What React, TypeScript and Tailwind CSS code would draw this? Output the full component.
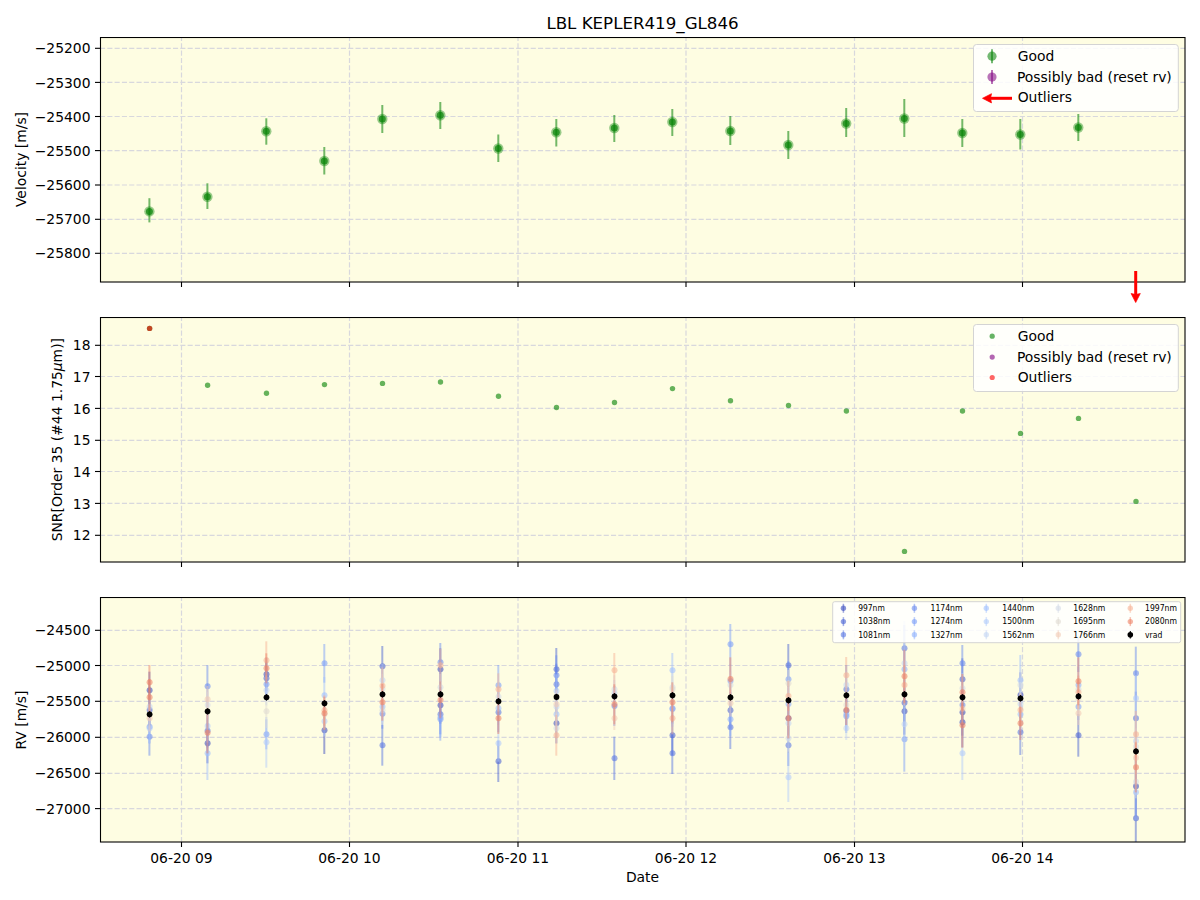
import React from "react";

const XT = [181.5, 349.5, 518, 686, 854.5, 1022.5];
const XL = ["06-20 09", "06-20 10", "06-20 11", "06-20 12", "06-20 13", "06-20 14"];
const X = [149.4, 207.4, 266.3, 324.3, 382.3, 440.3, 498.3, 556.3, 614.3, 672.3, 730.3, 788.3, 846.2, 904.3, 962.3, 1020.3, 1078.3, 1135.8];

const P = ["#3b4cc0", "#4a63d3", "#5977e3", "#6a8bef", "#7b9ff9", "#8db0fe", "#9fbfff", "#b1cbfc", "#c3d5f4", "#d3dbe7", "#e0dbd2", "#f2cbb7", "#f7b396", "#ee8468"];
const LEG = ["997nm", "1038nm", "1081nm", "1174nm", "1274nm", "1327nm", "1440nm", "1500nm", "1562nm", "1628nm", "1695nm", "1766nm", "1997nm", "2080nm"];

const V: [number, number, number][] = [
  [211.4, 198.2, 222.4], [196.7, 183.3, 209], [131.3, 118.3, 144.7], [161, 147, 174.5], [119, 105, 133],
  [115.3, 102, 129], [148.5, 134.5, 162], [132.3, 119, 146.5], [128, 115, 142], [122, 109, 136],
  [131, 116, 145], [145, 131, 159], [123.5, 108, 137], [118.5, 99, 137], [133, 119, 147],
  [134.5, 119, 149.5], [127.5, 114, 141],
];
const SNR = [328.4, 385.3, 393.3, 384.6, 383.4, 382, 396.2, 407.5, 402.5, 388.6, 400.7, 405.5, 411, 551.4, 411, 433.4, 418.4, 501.4];

type D = [number, number, number];
const COLS: { off: number; k: number; d: D[] }[] = [
  { off: 600, k: 343, d: [[247, 13, 52], [271, 0, 56], [292, 13, 55], [320, 8, 40], [330, 1, 50], [355, 11, 40], [380, 4, 50], [385, 7, 45], [410, 3, 57]] },
  { off: 600, k: 334, d: [[259, 3, 64], [298, 11, 40], [315, 9, 40], [378, 7, 50], [392, 2, 50], [398, 13, 62], [430, 0, 60], [460, 6, 80]] },
  { off: 600, k: 292, d: [[181, 12, 57], [205, 13, 45], [223, 0, 50], [235, 1, 50], [253, 4, 50], [271, 8, 45], [334, 10, 50], [403, 4, 45], [427, 7, 76]] },
  { off: 600, k: 310, d: [[190, 4, 58], [286, 6, 55], [331, 12, 45], [340, 13, 50], [343, 10, 45], [364, 7, 45], [391, 0, 71]] },
  { off: 600, k: 283, d: [[199, 1, 61], [241, 8, 50], [257, 12, 55], [266, 9, 45], [307, 13, 55], [320, 6, 45], [331, 9, 40], [341, 3, 45], [436, 2, 61]] },
  { off: 600, k: 283, d: [[187, 3, 58], [196, 12, 50], [208, 0, 63], [262, 9, 40], [300, 13, 55], [316, 0, 55], [343, 2, 60], [352, 5, 60], [358, 4, 64]] },
  { off: 600, k: 304, d: [[256, 4, 61], [268, 12, 48], [290, 9, 45], [325, 6, 50], [337, 2, 60], [355, 13, 47], [430, 7, 55], [484, 1, 62]] },
  { off: 600, k: 291, d: [[208, 1, 64], [226, 3, 60], [253, 2, 62], [273, 7, 50], [313, 11, 45], [320, 8, 45], [343, 6, 50], [370, 0, 60], [385, 9, 45], [406, 12, 61]] },
  { off: 600, k: 289, d: [[211, 12, 52], [268, 9, 42], [280, 8, 40], [313, 13, 60], [318, 3, 60], [355, 11, 35], [475, 2, 65]] },
  { off: 600, k: 286, d: [[211, 6, 52], [262, 9, 42], [268, 10, 40], [307, 13, 60], [325, 5, 55], [327, 4, 45], [355, 12, 48], [406, 1, 60], [460, 2, 62]] },
  { off: 600, k: 292, d: [[133, 4, 61], [237, 13, 65], [243, 4, 50], [255, 9, 40], [310, 11, 40], [331, 1, 55], [358, 5, 50], [382, 2, 65]] },
  { off: 600, k: 301, d: [[196, 1, 64], [238, 4, 55], [250, 10, 40], [288, 12, 45], [312, 5, 50], [355, 13, 60], [355, 0, 62], [370, 8, 45], [415, 9, 40], [436, 2, 62], [532, 7, 74]] },
  { off: 595, k: 301, d: [[241, 12, 55], [270, 8, 40], [283, 2, 73], [330, 10, 35], [345, 13, 45], [347, 1, 60], [358, 5, 50], [364, 4, 50], [400, 8, 35]] },
  { off: 595, k: 298, d: [[160, 2, 70], [205, 8, 127], [223, 5, 60], [244, 13, 80], [270, 12, 60], [323, 1, 70], [349, 0, 70], [388, 8, 60], [433, 4, 97]] },
  { off: 595, k: 307, d: [[205, 3, 55], [253, 1, 63], [280, 9, 45], [292, 13, 55], [330, 3, 55], [341, 11, 45], [352, 0, 70], [382, 0, 75], [391, 13, 67], [475, 7, 80]] },
  { off: 595, k: 310, d: [[256, 6, 76], [270, 9, 45], [300, 0, 68], [327, 8, 40], [345, 12, 50], [358, 6, 50], [385, 13, 50], [412, 2, 68]] },
  { off: 595, k: 304, d: [[178, 3, 53], [259, 13, 72], [270, 5, 55], [283, 9, 40], [292, 12, 50], [312, 10, 40], [335, 4, 40], [355, 11, 35], [421, 1, 64]] },
  { off: 595, k: 469, d: [[235, 3, 80], [310, 7, 70], [370, 2, 80], [418, 12, 70], [438, 8, 60], [455, 9, 55], [488, 11, 50], [517, 13, 75], [560, 9, 50], [574, 0, 90], [592, 6, 85], [670, 1, 100]] },
];

const GRID = "#d8d8dd";
const GREEN = "#008000";
const PURPLE = "#800080";

function Frame({ top, ys, labels, children, xlabels }: { top: number; ys: number[]; labels: string[]; children?: React.ReactNode; xlabels?: boolean }) {
  const b = top + 245;
  return (
    <g>
      <rect x={100} y={top} width={1085} height={245} fill="#fefde2" />
      {XT.map((x) => (
        <line key={x} x1={x} x2={x} y1={b} y2={top} stroke={GRID} strokeWidth={1.2} strokeDasharray="5.1 2.2" />
      ))}
      {ys.map((y) => (
        <line key={y} x1={100} x2={1185} y1={y} y2={y} stroke={GRID} strokeWidth={1.2} strokeDasharray="5.1 2.2" />
      ))}
      {children}
      <rect x={100.5} y={top + 0.5} width={1084.5} height={244.5} fill="none" stroke="#000" strokeWidth={1.1} />
      {XT.map((x) => (
        <line key={x} x1={x} x2={x} y1={b} y2={b + 5} stroke="#000" strokeWidth={1.1} />
      ))}
      {ys.map((y, i) => (
        <g key={y}>
          <line x1={95} x2={100} y1={y} y2={y} stroke="#000" strokeWidth={1.1} />
          <text x={90.5} y={y + 5.1} textAnchor="end" fontSize={13.89} fill="#000">{labels[i]}</text>
        </g>
      ))}
      {xlabels &&
        XT.map((x, i) => (
          <text key={x} x={x} y={863} textAnchor="middle" fontSize={13.89} fill="#000">{XL[i]}</text>
        ))}
    </g>
  );
}

function Arrow({ x1, y1, x2, y2 }: { x1: number; y1: number; x2: number; y2: number }) {
  const a = (Math.atan2(y2 - y1, x2 - x1) * 180) / Math.PI;
  const len = Math.hypot(x2 - x1, y2 - y1);
  return (
    <g transform={`translate(${x1} ${y1}) rotate(${a})`}>
      <line x1={0} y1={0} x2={len - 6} y2={0} stroke="#ff0000" strokeWidth={3} />
      <path d={`M${len} 0 L${len - 9} -4.6 L${len - 8} 0 L${len - 9} 4.6 Z`} fill="#ff0000" stroke="#ff0000" strokeWidth={0.7} />
    </g>
  );
}

function BigLegend({ top, arrow }: { top: number; arrow: boolean }) {
  const ty = [top + 17.2, top + 38, top + 58.4];
  const my = [top + 12.7, top + 33.6, top + 54];
  return (
    <g>
      <rect x={973.5} y={top + 1} width={204.8} height={67} rx={3} fill="#ffffff" fillOpacity={0.85} stroke="#d4d4d4" />
      {arrow ? (
        <>
          <line x1={992} x2={992} y1={my[0] - 7} y2={my[0] + 7} stroke={GREEN} strokeOpacity={0.55} strokeWidth={2} />
          <circle cx={992} cy={my[0]} r={4.6} fill={GREEN} fillOpacity={0.55} />
          <line x1={992} x2={992} y1={my[1] - 7} y2={my[1] + 7} stroke={PURPLE} strokeOpacity={0.55} strokeWidth={2} />
          <circle cx={992} cy={my[1]} r={4.6} fill={PURPLE} fillOpacity={0.55} />
          <Arrow x1={1012} y1={98.3} x2={982.5} y2={98.3} />
        </>
      ) : (
        <>
          <circle cx={992.2} cy={my[0]} r={2.6} fill={GREEN} fillOpacity={0.6} />
          <circle cx={992.2} cy={my[1]} r={2.6} fill={PURPLE} fillOpacity={0.6} />
          <circle cx={992.2} cy={my[2]} r={2.6} fill="#ff0000" fillOpacity={0.6} />
        </>
      )}
      <text x={1017.7} y={ty[0]} fontSize={13.89} fill="#000">Good</text>
      <text x={1017} y={ty[1]} fontSize={13.89} fill="#000">Possibly bad (reset rv)</text>
      <text x={1017.7} y={ty[2]} fontSize={13.89} fill="#000">Outliers</text>
    </g>
  );
}

function Velocity() {
  return (
    <svg width={1200} height={280} viewBox="0 37 1200 280" className="block">
      <Frame
        top={37}
        ys={[48.3, 82.4, 116.5, 150.6, 185, 219.3, 253.3]}
        labels={["−25200", "−25300", "−25400", "−25500", "−25600", "−25700", "−25800"]}
      >
        {V.map(([y, a, b], i) => (
          <g key={i}>
            <line x1={X[i]} x2={X[i]} y1={a} y2={b} stroke={GREEN} strokeOpacity={0.55} strokeWidth={2} />
            <circle cx={X[i]} cy={y} r={5.2} fill={GREEN} fillOpacity={0.4} />
            <circle cx={X[i]} cy={y} r={3.5} fill={GREEN} fillOpacity={0.68} />
          </g>
        ))}
        <BigLegend top={43.5} arrow />
      </Frame>
      <text transform="translate(26 159.5) rotate(-90)" textAnchor="middle" fontSize={13.89} fill="#000">Velocity [m/s]</text>
      <Arrow x1={1135.7} y1={271} x2={1135.7} y2={302.5} />
    </svg>
  );
}

function Snr() {
  return (
    <svg width={1200} height={280} viewBox="0 317 1200 280" className="block">
      <Frame
        top={317}
        ys={[345.3, 376.5, 408.4, 440.3, 471.5, 503.4, 535.3]}
        labels={["18", "17", "16", "15", "14", "13", "12"]}
      >
        {SNR.map((y, i) => (
          <circle key={i} cx={X[i] + 0.2} cy={y} r={2.7} fill={GREEN} fillOpacity={0.6} />
        ))}
        <circle cx={X[0] + 0.2} cy={SNR[0]} r={2.7} fill="#ff0000" fillOpacity={0.6} />
        <BigLegend top={323.5} arrow={false} />
      </Frame>
      <text
        transform="translate(62 439.7) rotate(-90)"
        textAnchor="middle"
        fontSize={13.89}
        fill="#000"
      >
        SNR[Order 35 (#44 1.75<tspan fontStyle="italic">μ</tspan>m)]
      </text>
    </svg>
  );
}

function Rv() {
  const lx = [[843.4, 858.2], [914.4, 930.5], [986.3, 1002.3], [1058.3, 1073.3], [1130.3, 1145]];
  const ly = [608.3, 621.6, 634.8];
  return (
    <svg width={1200} height={303} viewBox="0 597 1200 303" className="block">
      <defs>
        <clipPath id="rvclip">
          <rect x={100} y={597} width={1085} height={245} />
        </clipPath>
      </defs>
      <Frame
        top={597}
        ys={[630.3, 665.5, 701.3, 737.3, 773.3, 808.6]}
        labels={["−24500", "−25000", "−25500", "−26000", "−26500", "−27000"]}
        xlabels
      >
        <g clipPath="url(#rvclip)">
          {COLS.map((c, i) => {
            const ds = [...c.d].sort((a, b) => a[1] - b[1]);
            const kY = c.off + c.k / 3;
            return (
              <g key={i}>
                {ds.map((d, j) => {
                  const y = c.off + d[0] / 3;
                  const h = d[2] / 3;
                  return (
                    <g key={j}>
                      <line x1={X[i]} x2={X[i]} y1={y - h} y2={y + h} stroke={P[d[1]]} strokeOpacity={0.5} strokeWidth={2} />
                      <circle cx={X[i] + 0.2} cy={y} r={3} fill={P[d[1]]} fillOpacity={0.58} />
                    </g>
                  );
                })}
                <line x1={X[i] + 0.2} x2={X[i] + 0.2} y1={kY - 3.2} y2={kY + 3.2} stroke="#000" strokeWidth={1.1} />
                <circle cx={X[i] + 0.2} cy={kY} r={2.9} fill="#000" />
              </g>
            );
          })}
        </g>
        <rect x={832.7} y={601.7} width={348} height={41} rx={2} fill="#ffffff" fillOpacity={0.85} stroke="#d4d4d4" />
        {LEG.map((t, i) => {
          const cl = Math.floor(i / 3);
          const r = i % 3;
          return (
            <g key={t}>
              <line x1={lx[cl][0]} x2={lx[cl][0]} y1={ly[r] - 4.5} y2={ly[r] + 4.5} stroke={P[i]} strokeOpacity={0.5} strokeWidth={1.5} />
              <circle cx={lx[cl][0]} cy={ly[r]} r={2.7} fill={P[i]} fillOpacity={0.6} />
              <text x={lx[cl][1]} y={ly[r] + 2.8} fontSize={8.33} fill="#000" textLength={t.length === 5 ? 26.6 : 32} lengthAdjust="spacingAndGlyphs">{t}</text>
            </g>
          );
        })}
        <line x1={1130.3} x2={1130.3} y1={631} y2={638.6} stroke="#000" strokeWidth={1.1} />
        <circle cx={1130.3} cy={634.8} r={2.8} fill="#000" />
        <text x={1145} y={637.6} fontSize={8.33} fill="#000" textLength={17.3} lengthAdjust="spacingAndGlyphs">vrad</text>
      </Frame>
      <text x={642.5} y={882} textAnchor="middle" fontSize={13.89} fill="#000">Date</text>
      <text transform="translate(26 720) rotate(-90)" textAnchor="middle" fontSize={13.89} fill="#000">RV [m/s]</text>
    </svg>
  );
}

export default function App() {
  return (
    <div className="w-[1200px] h-[900px] bg-white overflow-hidden font-['DejaVu_Sans',sans-serif]">
      <div className="h-[37px] pl-[100px] flex items-end">
        <div className="w-[1085px] text-center text-[16.67px] leading-[20px] pb-[3px] text-black">LBL KEPLER419_GL846</div>
      </div>
      <Velocity />
      <Snr />
      <Rv />
    </div>
  );
}
